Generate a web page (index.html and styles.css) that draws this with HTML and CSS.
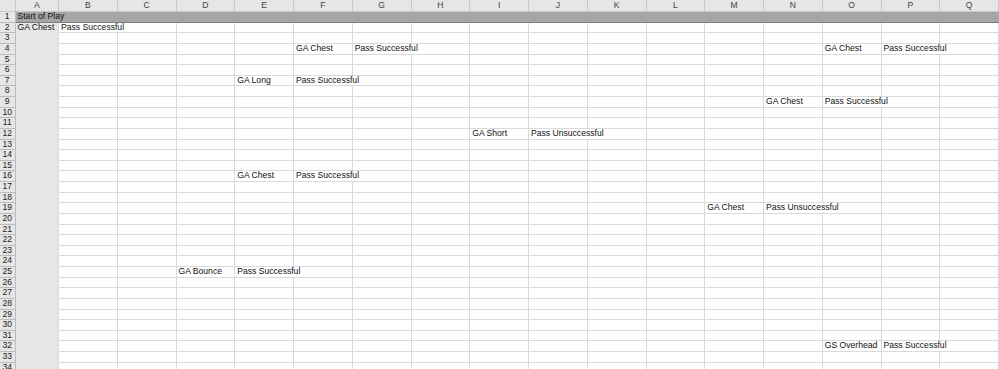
FILE: index.html
```html
<!DOCTYPE html>
<html>
<head>
<meta charset="utf-8">
<title>Sheet1</title>
<link rel="stylesheet" href="styles.css">
</head>
<body>
<table class="sheet">
	<colgroup>
		<col class="c-num">
		<col class="c-a">
		<col span="16" class="c-std">
	</colgroup>
	<thead>
		<tr>
			<th class="corner"></th>
			<th>A</th><th>B</th><th>C</th><th>D</th><th>E</th><th>F</th><th>G</th><th>H</th>
			<th>I</th><th>J</th><th>K</th><th>L</th><th>M</th><th>N</th><th>O</th><th>P</th><th>Q</th>
		</tr>
	</thead>
	<tbody>
		<tr class="title"><th>1</th><td colspan="17">Start of Play</td></tr>
		<tr><th>2</th><td class="fill">GA Chest</td><td colspan="2">Pass Successful</td><td></td><td></td><td></td><td></td><td></td><td></td><td></td><td></td><td></td><td></td><td></td><td></td><td></td><td></td></tr>
		<tr><th>3</th><td class="fill"></td><td></td><td></td><td></td><td></td><td></td><td></td><td></td><td></td><td></td><td></td><td></td><td></td><td></td><td></td><td></td><td></td></tr>
		<tr><th>4</th><td class="fill"></td><td></td><td></td><td></td><td></td><td>GA Chest</td><td colspan="2">Pass Successful</td><td></td><td></td><td></td><td></td><td></td><td></td><td>GA Chest</td><td colspan="2">Pass Successful</td></tr>
		<tr><th>5</th><td class="fill"></td><td></td><td></td><td></td><td></td><td></td><td></td><td></td><td></td><td></td><td></td><td></td><td></td><td></td><td></td><td></td><td></td></tr>
		<tr><th>6</th><td class="fill"></td><td></td><td></td><td></td><td></td><td></td><td></td><td></td><td></td><td></td><td></td><td></td><td></td><td></td><td></td><td></td><td></td></tr>
		<tr><th>7</th><td class="fill"></td><td></td><td></td><td></td><td>GA Long</td><td colspan="2">Pass Successful</td><td></td><td></td><td></td><td></td><td></td><td></td><td></td><td></td><td></td><td></td></tr>
		<tr><th>8</th><td class="fill"></td><td></td><td></td><td></td><td></td><td></td><td></td><td></td><td></td><td></td><td></td><td></td><td></td><td></td><td></td><td></td><td></td></tr>
		<tr><th>9</th><td class="fill"></td><td></td><td></td><td></td><td></td><td></td><td></td><td></td><td></td><td></td><td></td><td></td><td></td><td>GA Chest</td><td colspan="2">Pass Successful</td><td></td></tr>
		<tr><th>10</th><td class="fill"></td><td></td><td></td><td></td><td></td><td></td><td></td><td></td><td></td><td></td><td></td><td></td><td></td><td></td><td></td><td></td><td></td></tr>
		<tr><th>11</th><td class="fill"></td><td></td><td></td><td></td><td></td><td></td><td></td><td></td><td></td><td></td><td></td><td></td><td></td><td></td><td></td><td></td><td></td></tr>
		<tr><th>12</th><td class="fill"></td><td></td><td></td><td></td><td></td><td></td><td></td><td></td><td>GA Short</td><td colspan="2">Pass Unsuccessful</td><td></td><td></td><td></td><td></td><td></td><td></td></tr>
		<tr><th>13</th><td class="fill"></td><td></td><td></td><td></td><td></td><td></td><td></td><td></td><td></td><td></td><td></td><td></td><td></td><td></td><td></td><td></td><td></td></tr>
		<tr><th>14</th><td class="fill"></td><td></td><td></td><td></td><td></td><td></td><td></td><td></td><td></td><td></td><td></td><td></td><td></td><td></td><td></td><td></td><td></td></tr>
		<tr><th>15</th><td class="fill"></td><td></td><td></td><td></td><td></td><td></td><td></td><td></td><td></td><td></td><td></td><td></td><td></td><td></td><td></td><td></td><td></td></tr>
		<tr><th>16</th><td class="fill"></td><td></td><td></td><td></td><td>GA Chest</td><td colspan="2">Pass Successful</td><td></td><td></td><td></td><td></td><td></td><td></td><td></td><td></td><td></td><td></td></tr>
		<tr><th>17</th><td class="fill"></td><td></td><td></td><td></td><td></td><td></td><td></td><td></td><td></td><td></td><td></td><td></td><td></td><td></td><td></td><td></td><td></td></tr>
		<tr><th>18</th><td class="fill"></td><td></td><td></td><td></td><td></td><td></td><td></td><td></td><td></td><td></td><td></td><td></td><td></td><td></td><td></td><td></td><td></td></tr>
		<tr><th>19</th><td class="fill"></td><td></td><td></td><td></td><td></td><td></td><td></td><td></td><td></td><td></td><td></td><td></td><td>GA Chest</td><td colspan="2">Pass Unsuccessful</td><td></td><td></td></tr>
		<tr><th>20</th><td class="fill"></td><td></td><td></td><td></td><td></td><td></td><td></td><td></td><td></td><td></td><td></td><td></td><td></td><td></td><td></td><td></td><td></td></tr>
		<tr><th>21</th><td class="fill"></td><td></td><td></td><td></td><td></td><td></td><td></td><td></td><td></td><td></td><td></td><td></td><td></td><td></td><td></td><td></td><td></td></tr>
		<tr><th>22</th><td class="fill"></td><td></td><td></td><td></td><td></td><td></td><td></td><td></td><td></td><td></td><td></td><td></td><td></td><td></td><td></td><td></td><td></td></tr>
		<tr><th>23</th><td class="fill"></td><td></td><td></td><td></td><td></td><td></td><td></td><td></td><td></td><td></td><td></td><td></td><td></td><td></td><td></td><td></td><td></td></tr>
		<tr><th>24</th><td class="fill"></td><td></td><td></td><td></td><td></td><td></td><td></td><td></td><td></td><td></td><td></td><td></td><td></td><td></td><td></td><td></td><td></td></tr>
		<tr><th>25</th><td class="fill"></td><td></td><td></td><td>GA Bounce</td><td colspan="2">Pass Successful</td><td></td><td></td><td></td><td></td><td></td><td></td><td></td><td></td><td></td><td></td><td></td></tr>
		<tr><th>26</th><td class="fill"></td><td></td><td></td><td></td><td></td><td></td><td></td><td></td><td></td><td></td><td></td><td></td><td></td><td></td><td></td><td></td><td></td></tr>
		<tr><th>27</th><td class="fill"></td><td></td><td></td><td></td><td></td><td></td><td></td><td></td><td></td><td></td><td></td><td></td><td></td><td></td><td></td><td></td><td></td></tr>
		<tr><th>28</th><td class="fill"></td><td></td><td></td><td></td><td></td><td></td><td></td><td></td><td></td><td></td><td></td><td></td><td></td><td></td><td></td><td></td><td></td></tr>
		<tr><th>29</th><td class="fill"></td><td></td><td></td><td></td><td></td><td></td><td></td><td></td><td></td><td></td><td></td><td></td><td></td><td></td><td></td><td></td><td></td></tr>
		<tr><th>30</th><td class="fill"></td><td></td><td></td><td></td><td></td><td></td><td></td><td></td><td></td><td></td><td></td><td></td><td></td><td></td><td></td><td></td><td></td></tr>
		<tr><th>31</th><td class="fill"></td><td></td><td></td><td></td><td></td><td></td><td></td><td></td><td></td><td></td><td></td><td></td><td></td><td></td><td></td><td></td><td></td></tr>
		<tr><th>32</th><td class="fill"></td><td></td><td></td><td></td><td></td><td></td><td></td><td></td><td></td><td></td><td></td><td></td><td></td><td></td><td>GS Overhead</td><td colspan="2">Pass Successful</td></tr>
		<tr><th>33</th><td class="fill"></td><td></td><td></td><td></td><td></td><td></td><td></td><td></td><td></td><td></td><td></td><td></td><td></td><td></td><td></td><td></td><td></td></tr>
		<tr><th>34</th><td class="fill"></td><td></td><td></td><td></td><td></td><td></td><td></td><td></td><td></td><td></td><td></td><td></td><td></td><td></td><td></td><td></td><td></td></tr>
	</tbody>
</table>
</body>
</html>
```

FILE: styles.css
```css
html,body{margin:0;padding:0;background:#fff;overflow:hidden;}

.sheet{
	width:999px;
	table-layout:fixed;
	border-collapse:collapse;
	font-family:"Liberation Sans","Noto Sans",sans-serif;
	font-size:8.6px;
	color:#111;
}
.c-num{width:15px;}
.c-a{width:43.5px;}
.c-std{width:58.76px;}

.sheet td,.sheet th{
	padding:0 0 0 2px;
	height:9.63px;
	line-height:9.63px;
	white-space:nowrap;
	overflow:hidden;
	text-align:left;
	font-weight:normal;
	border:1px solid #dadada;
}

/* column letters */
.sheet thead th{
	height:11px;
	line-height:11px;
	padding:0;
	text-align:center;
	background:#e6e6e6;
	color:#444;
	border:1px solid #c8c8c8;
	border-top:0;
}
.sheet thead th.corner{border-left:0;}

/* row numbers */
.sheet tbody th{
	padding:0;
	text-align:center;
	background:#e6e6e6;
	color:#222;
	border:1px solid #bcbcbc;
	border-left:0;
}

.title td{
	background:#a6a6a6;
	border-color:#a6a6a6;
	border-bottom:1px solid #7c7c7c;
	color:#111;
}

td.fill{
	background:#e7e6e6;
	border-top-color:#e7e6e6;
	border-bottom-color:#e7e6e6;
}
```
